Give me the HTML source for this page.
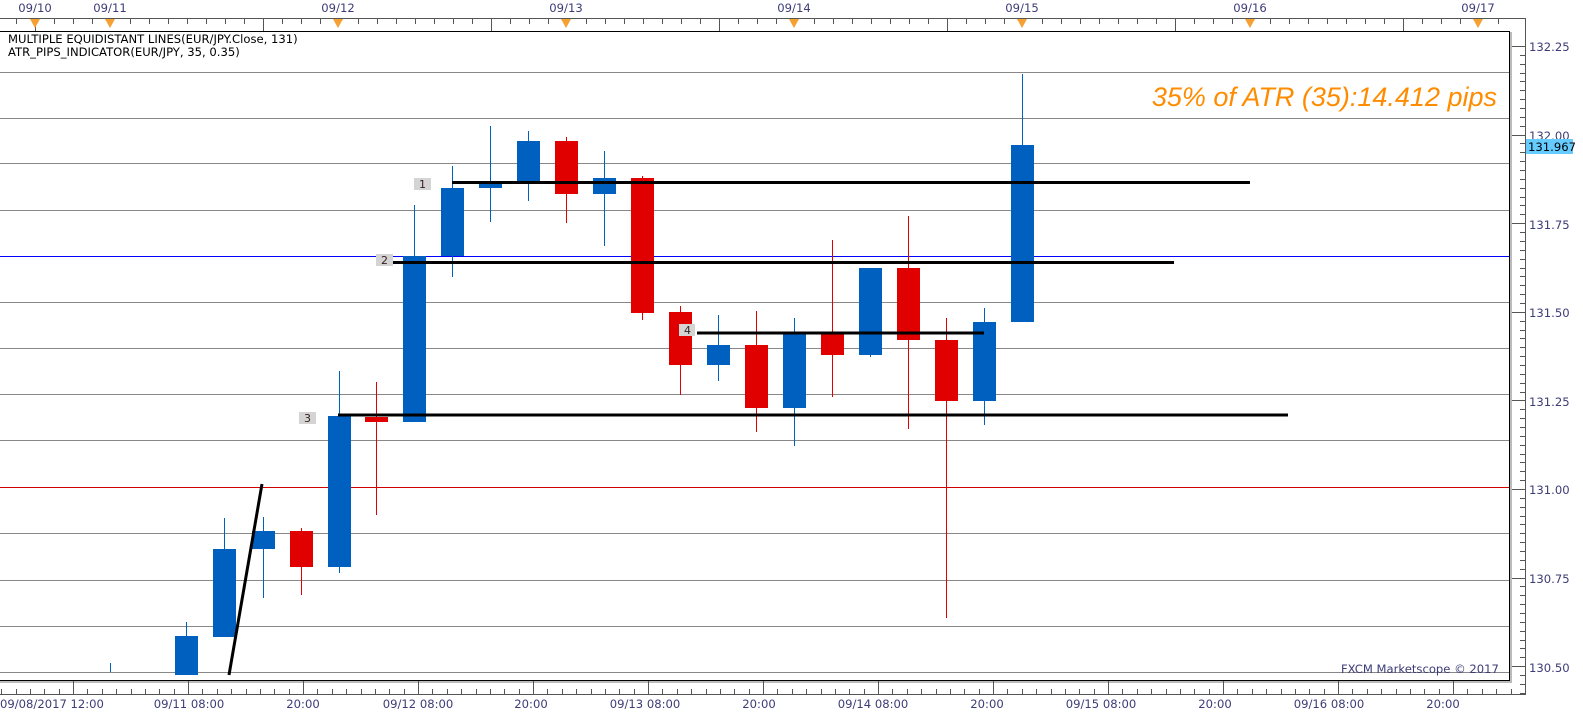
<!DOCTYPE html>
<html><head><meta charset="utf-8"><style>
html,body{margin:0;padding:0;background:#fff;}
svg{display:block;font-family:"DejaVu Sans","Liberation Sans",sans-serif;}
</style></head><body>
<svg id="s" width="1583" height="720" xmlns="http://www.w3.org/2000/svg">
<rect width="1583" height="720" fill="#fff"/>
<g id="grid" stroke="#888" stroke-width="1">
<line x1="0" x2="1510" y1="72.5" y2="72.5"/><line x1="0" x2="1510" y1="118.5" y2="118.5"/>
<line x1="0" x2="1510" y1="163.5" y2="163.5"/><line x1="0" x2="1510" y1="210.5" y2="210.5"/>
<line x1="0" x2="1510" y1="302.5" y2="302.5"/><line x1="0" x2="1510" y1="348.5" y2="348.5"/>
<line x1="0" x2="1510" y1="394.5" y2="394.5"/><line x1="0" x2="1510" y1="440.5" y2="440.5"/>
<line x1="0" x2="1510" y1="533.5" y2="533.5"/><line x1="0" x2="1510" y1="580.5" y2="580.5"/>
<line x1="0" x2="1510" y1="626.5" y2="626.5"/><line x1="0" x2="1510" y1="672.5" y2="672.5"/>
</g>
<line x1="0" x2="1510" y1="256.5" y2="256.5" stroke="#0000ff"/>
<line x1="0" x2="1510" y1="487.5" y2="487.5" stroke="#d00000"/>
<g id="candles"></g>
<g stroke="#000" stroke-width="3">
<line x1="452" x2="1250" y1="182.5" y2="182.5"/>
<line x1="378" x2="1174" y1="262.5" y2="262.5"/>
<line x1="338" x2="1288" y1="415" y2="415"/>
<line x1="697" x2="984" y1="333" y2="333"/>
<line x1="229" y1="675" x2="262" y2="484"/>
</g>
<g font-size="11" fill="#3a2020">
<rect x="414" y="178" width="17" height="12" fill="#d4d4d4"/><text x="419" y="188">1</text>
<rect x="376" y="254" width="17" height="12" fill="#d4d4d4"/><text x="381" y="264">2</text>
<rect x="299" y="412" width="17" height="12" fill="#d4d4d4"/><text x="304" y="422">3</text>
<rect x="679" y="324" width="16" height="12" fill="#d4d4d4"/><text x="684" y="334">4</text>
</g>
<text x="1497" y="106" text-anchor="end" font-family="Liberation Sans,sans-serif" font-style="italic" font-size="27" fill="#ff8c00">35% of ATR (35):14.412 pips</text>
<text x="8" y="43" font-size="11.6" fill="#000">MULTIPLE EQUIDISTANT LINES(EUR/JPY.Close, 131)</text>
<text x="8" y="56" font-size="11.6" fill="#000">ATR_PIPS_INDICATOR(EUR/JPY, 35, 0.35)</text>
<text x="1341" y="673" font-size="11.6" fill="#3c3c78">FXCM Marketscope © 2017</text>
<path d="M0 31.5H1509.5V680.5H0" fill="none" stroke="#000"/>
<path d="M1511 32V682H0" fill="none" stroke="#bbb" stroke-width="2"/>
<line x1="0" x2="1525" y1="18.5" y2="18.5" stroke="#555"/>
<line x1="0" x2="1525" y1="694.5" y2="694.5" stroke="#555"/>
<line x1="1525.5" x2="1525.5" y1="18" y2="695" stroke="#555"/>
<g id="ticks" stroke="#555"></g>
<g id="labels" font-size="11.6" fill="#3c3c78"></g>
<rect x="1526" y="139" width="47" height="15" fill="#66ccff"/>
<text x="1528" y="151" font-size="11.6" fill="#000">131.967</text>
</svg>
<script>
var NS="http://www.w3.org/2000/svg";
function el(p,t,a,txt){var e=document.createElementNS(NS,t);for(var k in a)e.setAttribute(k,a[k]);if(txt)e.textContent=txt;document.getElementById(p).appendChild(e);}
var C=[
[110,'b',663,672,663,672],
[186,'b',636,675,622,675],
[224,'b',549,637,518,637],
[263,'b',531,549,517,598],
[301,'r',531,567,528,595],
[339,'b',416,567,371,573],
[376,'r',417,422,382,515],
[414,'b',256,422,205,422],
[452,'b',188,256,166,277],
[490,'b',181,188,126,222],
[528,'b',141,181,131,201],
[566,'r',141,194,137,223],
[604,'b',178,194,151,246],
[642,'r',178,313,176,320],
[680,'r',312,365,306,395],
[718,'b',345,365,315,381],
[756,'r',345,408,311,432],
[794,'b',333,408,318,446],
[832,'r',333,355,240,397],
[870,'b',268,355,268,357],
[908,'r',268,340,216,429],
[946,'r',340,401,318,618],
[984,'b',322,401,308,425],
[1022,'b',145,322,74,322]];
C.forEach(function(c){var col=c[1]=='b'?'#0060c0':'#e00000';
el('candles','line',{x1:c[0]+.5,x2:c[0]+.5,y1:c[4],y2:c[5],stroke:col});
if(c[0]!=110)el('candles','rect',{x:c[0]-11,y:c[2],width:23,height:Math.max(c[3]-c[2],4),fill:col});});
for(var x=35-228;x<1510;x+=19){var d=Math.round((x-35)/19);var maj=((d%12)+12)%12==0;if(x<0)continue;el('ticks','line',{x1:x+.5,x2:x+.5,y1:18,y2:maj?31:24});}
var tl=[[35,'09/10'],[110,'09/11'],[338,'09/12'],[566,'09/13'],[794,'09/14'],[1022,'09/15'],[1250,'09/16'],[1478,'09/17']];
tl.forEach(function(t){el('labels','text',{x:t[0],y:12,'text-anchor':'middle'},t[1]);
el('labels','path',{d:'M'+(t[0]-5)+' 19L'+(t[0]+5)+' 19L'+t[0]+' 28Z',fill:'#f5a030'});});
for(var x=73-115*2;x<1525;x+=14.375){if(x<0)continue;var k=Math.round((x-73)/14.375);var maj=((k%8)+8)%8==0;el('ticks','line',{x1:Math.round(x)+.5,x2:Math.round(x)+.5,y1:maj?681:689,y2:694});}
var bl=[[0,'09/08/2017 12:00','start'],[189,'09/11 08:00'],[303,'20:00'],[418,'09/12 08:00'],[531,'20:00'],[645,'09/13 08:00'],[759,'20:00'],[873,'09/14 08:00'],[987,'20:00'],[1101,'09/15 08:00'],[1215,'20:00'],[1329,'09/16 08:00'],[1443,'20:00']];
bl.forEach(function(b){el('labels','text',{x:b[0],y:708,'text-anchor':b[2]||'middle'},b[1]);});
for(var y=46;y<694;y+=8.86){var i=Math.round((y-46)/8.86);el('ticks','line',{x1:i%10==0?1512:1520,x2:1525,y1:Math.round(y)+.5,y2:Math.round(y)+.5});}
[['132.25',46],['132.00',135],['131.75',224],['131.50',312],['131.25',401],['131.00',489],['130.75',578],['130.50',667]].forEach(function(p){el('labels','text',{x:1529,y:p[1]+5},p[0]);});
</script>
</body></html>
